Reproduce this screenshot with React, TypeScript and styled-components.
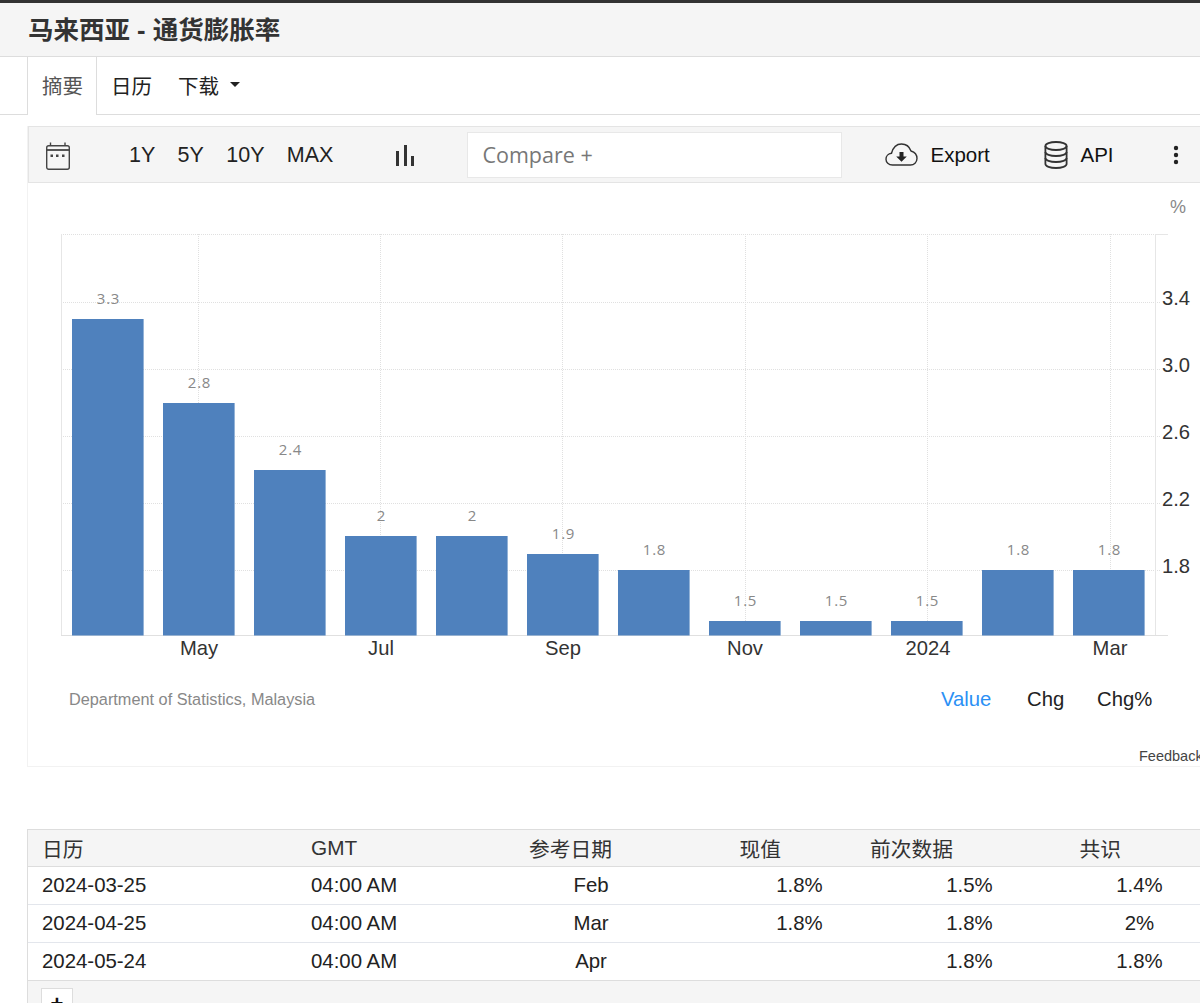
import React from "react";
import styled, { createGlobalStyle } from "styled-components";

const Global = createGlobalStyle`
  html, body { margin: 0; padding: 0; background: #fff; overflow: hidden; height: 1003px; }
  body { font-family: "Liberation Sans", "Noto Sans CJK SC", Arial, sans-serif; color: #222; }
`;
const Page = styled.div`width: 1200px; height: 1003px; overflow: hidden; display: flex; flex-direction: column;`;
const TitleBar = styled.header`
  flex: none; box-sizing: border-box; height: 57px; border-top: 3px solid #333; border-bottom: 1px solid #ddd;
  background: #f5f5f5; display: flex; align-items: center; padding: 0 0 4px 28px;
`;
const Title = styled.h1`margin: 0; font-size: 25.5px; font-weight: 700; color: #333;`;
const Tabs = styled.nav`
  height: 57px; flex: none; border-bottom: 1px solid #ddd; padding-left: 27px; display: flex; align-items: stretch;
`;
const Tab = styled.div`
  display: flex; align-items: center; font-size: 20.5px; padding: 0 12px 2px 14px; color: #222;
`;
const ActiveTab = styled(Tab)`
  box-sizing: border-box; height: 58px; padding: 0 13px 3px 14px; color: #555; background: #fff; border: 1px solid #ddd; border-width: 0 1px;
`;
const Caret = styled.span`
  display: inline-block; margin-left: 11px; border-top: 5px solid #222; border-left: 5px solid transparent; border-right: 5px solid transparent;
`;
const Card = styled.section`margin: 11px 0 0 27px; flex: none; height: 640px; border-left: 1px solid #f2f2f2; border-bottom: 1px solid #f2f2f2; display: flex; flex-direction: column;`;
const Toolbar = styled.div`
  height: 55px; flex: none; background: #f5f5f5; border: 1px solid #e4e4e4; border-right: 0; display: flex; align-items: center;
`;
const CalSlot = styled.div`width: 100px; padding: 2px 0 0 17px; box-sizing: border-box; display: flex; align-items: center;`;
const Range = styled.span`font-size: 21.5px; color: #222; margin: 2px 22.3px 0 0;`;
const BarsSlot = styled.div`margin-left: 39.800px; width: 72px; display: flex; align-items: center;`;
const Compare = styled.div`
  width: 375px; height: 46px; background: #fff; border: 1px solid #e8e8e8; display: flex; align-items: center;
  padding-left: 14px; box-sizing: border-box; font-size: 21.5px; font-family: "Open Sans", sans-serif; color: #777;
`;
const Action = styled.div<{ $w: number; $ml?: number }>`
  display: flex; align-items: center; width: ${p => p.$w}px; margin-left: ${p => p.$ml ?? 0}px; font-size: 20.5px; color: #111; gap: 12px;
`;
const ChartSvg = styled.svg`display: block; flex: none;`;

const TableWrap = styled.section`margin: 62px 0 0 27px; border-left: 1px solid #ddd; border-top: 1px solid #ddd; flex: 1; display: flex; flex-direction: column;`;
const HeadRow = styled.div`
  display: grid; grid-template-columns: 269px 120px 181px 169px 172px 168px; padding: 0 0 1px 14px; height: 35px; background: #f5f5f5;
  border-bottom: 1px solid #ddd; align-items: center; font-size: 20.750px; color: #333;
`;
const HeadCell = styled.div<{ $right?: boolean }>`text-align: ${p => (p.$right ? "right" : "left")}; white-space: nowrap;`;
const Row = styled.div`
  display: grid; grid-template-columns: 269px 156.5px 247px 170px 170px 170px; padding-left: 14px; height: 37px;
  border-bottom: 1px solid #e3e6ec; align-items: center; font-size: 20.4px; color: #222;
`;
const Cell = styled.div<{ $center?: boolean }>`text-align: ${p => (p.$center ? "center" : "left")}; white-space: nowrap;`;
const TableFoot = styled.div`flex: 1; background: #f5f5f5; border-top: 1px solid #ddd; margin-top: -1px; padding: 7px 0 0 13px;`;
const PlusBtn = styled.div`
  width: 32px; height: 30px; background: #fff; border: 1px solid #ddd; box-sizing: border-box; text-align: center; font-weight: 700; font-size: 22px; line-height: 30px; color: #111;
`;

const values = [3.3, 2.8, 2.4, 2, 2, 1.9, 1.8, 1.5, 1.5, 1.5, 1.8, 1.8];
const tops = [319, 403, 470, 536, 536, 554, 570, 621, 621, 621, 570, 570];
const gridX = [198, 380, 562, 745, 927, 1110];
const gridY = [302, 369, 436, 503, 570];
const yLabels: [string, number][] = [["3.4", 298], ["3.0", 365], ["2.6", 432], ["2.2", 499], ["1.8", 566]];
const xLabels: [string, number][] = [["May", 199], ["Jul", 381], ["Sep", 563], ["Nov", 745], ["2024", 928], ["Mar", 1110]];

const Chart = () => (
  <ChartSvg width={1172} height={583} viewBox="28 183 1172 583" fontFamily='"Liberation Sans", sans-serif'>
    <text x={1178} y={213} fontSize={18} fill="#888" textAnchor="middle">%</text>
    <line x1={61} x2={1155} y1={234.5} y2={234.5} stroke="#e0e0e0" strokeDasharray="1 1" />
    <line x1={1155} x2={1168} y1={234.5} y2={234.5} stroke="#e6e6e6" />
    {gridY.map(y => <line key={y} x1={61} x2={1161} y1={y + 0.5} y2={y + 0.5} stroke="#e0e0e0" strokeDasharray="1 1" />)}
    {gridX.map(x => <line key={x} x1={x + 0.5} x2={x + 0.5} y1={234} y2={635} stroke="#e0e0e0" strokeDasharray="1 1" />)}
    <line x1={61.5} x2={61.5} y1={234} y2={635} stroke="#e6e6e6" />
    <line x1={1155.5} x2={1155.5} y1={234} y2={635} stroke="#e6e6e6" />
    <line x1={61} x2={1168} y1={635.5} y2={635.5} stroke="#e0e0e0" />
    {values.map((v, i) => {
      const x = 72 + i * 91;
      return (
        <g key={i}>
          <rect x={x} y={tops[i]} width={71.6} height={635.5 - tops[i]} fill="#4f81bd" />
          <text x={x + 36.5} y={tops[i] - 15} fontSize={15} letterSpacing={0.8} fontFamily='"Open Sans", sans-serif' fill="#888" textAnchor="middle">{v}</text>
        </g>
      );
    })}
    {yLabels.map(([t, y]) => <text key={t} x={1162} y={y + 7} fontSize={20.2} fill="#333">{t}</text>)}
    {xLabels.map(([t, x]) => <text key={t} x={x} y={655} fontSize={20.2} fill="#333" textAnchor="middle">{t}</text>)}
    <text x={69} y={705} fontSize={16.3} fill="#888">Department of Statistics, Malaysia</text>
    <text x={941} y={706} fontSize={20.3} fill="#2b90f5">Value</text>
    <text x={1027} y={706} fontSize={20.3} fill="#222">Chg</text>
    <text x={1097} y={706} fontSize={20.3} fill="#222">Chg%</text>
    <text x={1139} y={761} fontSize={14.5} fill="#444">Feedback</text>
  </ChartSvg>
);

const CalendarIcon = () => (
  <svg width="24" height="28" viewBox="0 0 24 28" fill="none" stroke="#444" strokeWidth="1.4">
    <rect x=".7" y="3.700" width="22.600" height="23.600" rx="2" />
    <path d="M.7 8h22.600" strokeWidth="1.800" />
    <path d="M4.500 .5v3M19 .5v3" />
    <path d="M4.500 13.800h2.500M10 13.800h2.500M16 13.800h2.500" strokeWidth="2.400" />
  </svg>
);
const BarsIcon = () => (
  <svg width="20" height="24" viewBox="0 0 20 24" fill="#333"><rect x="1" y="8" width="3" height="15" /><rect x="9" y="2" width="3" height="21" /><rect x="16" y="13" width="3" height="10" /></svg>
);
const CloudIcon = () => (
  <svg width="33" height="23" viewBox="0 0 33 23" fill="none" stroke="#333" strokeWidth="1.4">
    <path d="M7.500 22C3.500 22 1 19.200 1 16.200C1 13.200 3.300 10.600 6.500 10.300C8 4.500 11.500 1 16.500 1C21 1 24.500 3.800 26 8C29.500 9 32 12 32 15.600C32 19.200 29 22 25.500 22Z" />
    <path d="M14.500 9H18.500V13.500H21.800L16.500 18.800L11.200 13.500H14.500Z" fill="#222" stroke="none" />
  </svg>
);
const DbIcon = () => (
  <svg width="24" height="28" viewBox="0 0 24 28" fill="none" stroke="#333" strokeWidth="1.800">
    <ellipse cx="12" cy="5" rx="10.600" ry="4" />
    <path d="M1.400 5v18c0 2.200 4.700 4 10.600 4s10.600-1.800 10.600-4V5" />
    <path d="M1.400 11c0 2.200 4.700 4 10.600 4s10.600-1.800 10.600-4M1.400 17c0 2.200 4.700 4 10.600 4s10.600-1.800 10.600-4" />
  </svg>
);
const DotsIcon = () => (
  <svg width="6" height="20" viewBox="0 0 6 20" fill="#222"><circle cx="3" cy="3" r="2.200" /><circle cx="3" cy="10" r="2.200" /><circle cx="3" cy="17" r="2.200" /></svg>
);

const rows = [
  ["2024-03-25", "04:00 AM", "Feb", "1.8%", "1.5%", "1.4%"],
  ["2024-04-25", "04:00 AM", "Mar", "1.8%", "1.8%", "2%"],
  ["2024-05-24", "04:00 AM", "Apr", "", "1.8%", "1.8%"],
];

export default function App() {
  return (
    <Page>
      <Global />
      <TitleBar><Title>马来西亚 - 通货膨胀率</Title></TitleBar>
      <Tabs>
        <ActiveTab>摘要</ActiveTab>
        <Tab>日历</Tab>
        <Tab>下载<Caret /></Tab>
      </Tabs>
      <Card>
        <Toolbar>
          <CalSlot><CalendarIcon /></CalSlot>
          <Range>1Y</Range><Range>5Y</Range><Range>10Y</Range><Range>MAX</Range>
          <BarsSlot><BarsIcon /></BarsSlot>
          <Compare>Compare +</Compare>
          <Action $w={159} $ml={43}><CloudIcon />Export</Action>
          <Action $w={129}><DbIcon />API</Action>
          <DotsIcon />
        </Toolbar>
        <Chart />
      </Card>
      <TableWrap>
        <HeadRow>
          <HeadCell>日历</HeadCell><HeadCell>GMT</HeadCell>
          <HeadCell $right>参考日期</HeadCell><HeadCell $right>现值</HeadCell><HeadCell $right>前次数据</HeadCell><HeadCell $right>共识</HeadCell>
        </HeadRow>
        {rows.map(r => (
          <Row key={r[0]}>
            <Cell>{r[0]}</Cell><Cell>{r[1]}</Cell>
            {r.slice(2).map((c, i) => <Cell $center key={i}>{c}</Cell>)}
          </Row>
        ))}
        <TableFoot><PlusBtn>+</PlusBtn></TableFoot>
      </TableWrap>
    </Page>
  );
}
